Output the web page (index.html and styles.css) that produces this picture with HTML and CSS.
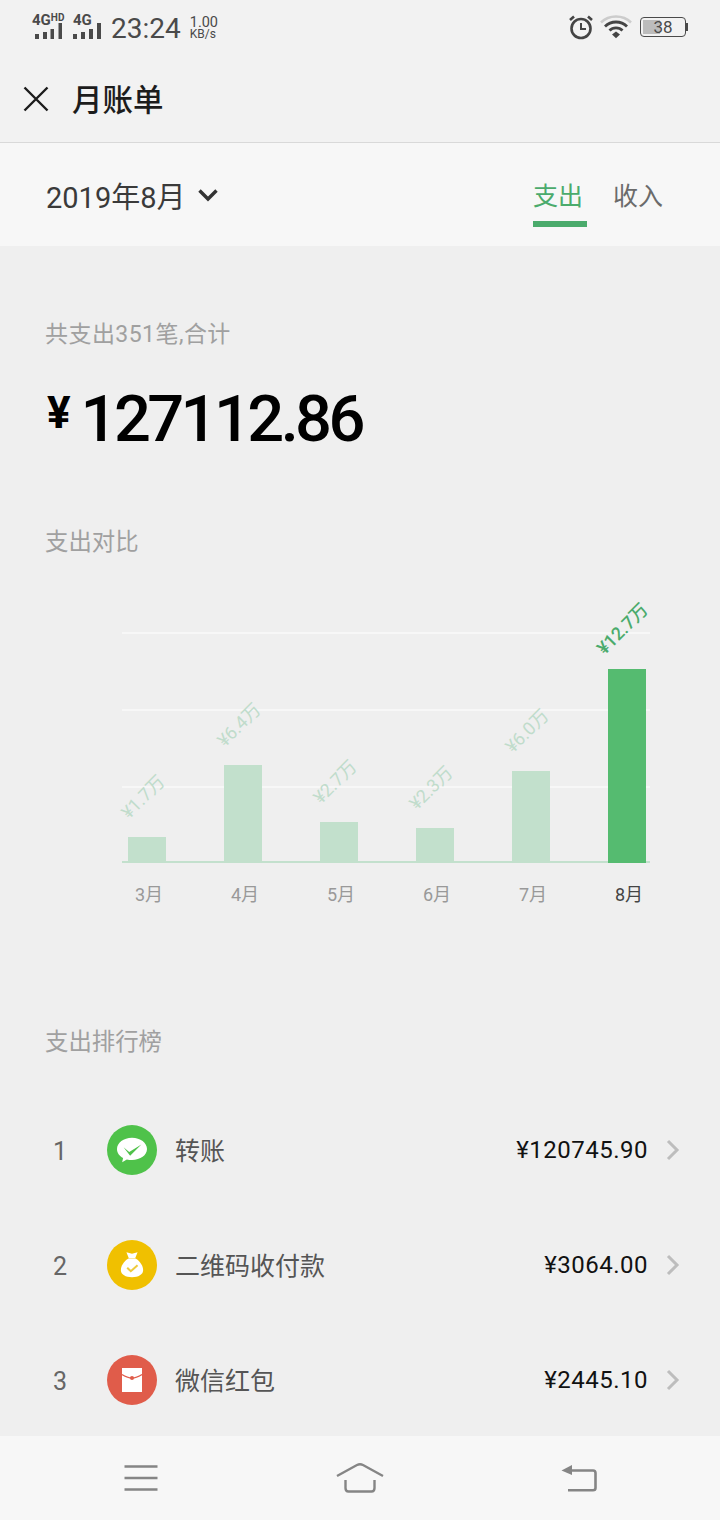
FILE: index.html
```html
<!DOCTYPE html>
<html lang="zh-CN">

<head>
    <meta charset="UTF-8">
    <meta name="viewport" content="width=device-width, initial-scale=1.0">
    <title>月账单</title>
    <link rel="stylesheet" href="styles.css">
</head>

<body>
    <div class="screen">
        <div class="statusbar">
            <div class="status-left">
                <div class="signal">
                    <span class="net">4G<sup>HD</sup></span>
                    <svg width="30" height="16" viewBox="0 0 30 16"><path d="M3 11h4v5H3zM11 9h4v7h-4zM18.500 6h3.500v10h-3.500zM26.500 0h3.500v16h-3.500z" fill="#4a4a4a"/></svg>
                </div>
                <div class="signal">
                    <span class="net">4G</span>
                    <svg width="30" height="16" viewBox="0 0 30 16"><path d="M0 11h4v5H0zM8 9h4v7H8zM16 6h4v10h-4zM24 0h4v16h-4z" fill="#4a4a4a"/></svg>
                </div>
                <span class="clock">23:24</span>
                <div class="speed"><span>1.00</span><span class="speed-unit">KB/s</span></div>
            </div>
            <div class="status-right">
                <svg width="26" height="26" viewBox="0 0 26 26" fill="none" stroke="#444"><circle cx="13" cy="14.500" r="9.500" stroke-width="2.600"/><path d="M13 9v6h5" stroke-width="2"/><path d="M2 6l4-3.500M24 6l-4-3.500" stroke-width="2.600"/></svg>
                <svg width="32" height="24" viewBox="0 0 32 24" fill="none"><path d="M1 7.500C9 -0.500 23 -0.500 31 7.500" stroke="#ccc" stroke-width="2.500"/><path d="M5 11.500C11 5.500 21 5.500 27 11.500M9.500 15.500C13 12 19 12 22.500 15.500" stroke="#444" stroke-width="2.800"/><path d="M12 19.500l4-3 4 3-4 3.800z" fill="#444"/></svg>
                <div class="battery">
                    <div class="battery-body"><div class="battery-level"></div><span class="battery-num">38</span></div>
                    <div class="battery-cap"></div>
                </div>
            </div>
        </div>

        <div class="topbar">
            <svg class="close-icon" width="26" height="26" viewBox="0 0 26 26" fill="none" stroke="#1c1c1c" stroke-width="2.400"><path d="M1.500 1.500l23 23M24.500 1.500l-23 23"/></svg>
            <h1 class="title">月账单</h1>
        </div>

        <div class="datebar">
            <div class="date-pick">
                <span>2019年8月</span>
                <svg width="20" height="14" viewBox="0 0 20 14" fill="none" stroke="#333" stroke-width="3.400"><path d="M1.500 2.500L10 11l8.500-8.500"/></svg>
            </div>
            <div class="tabs">
                <div class="tab tab-active">支出</div>
                <div class="tab">收入</div>
            </div>
        </div>

        <div class="content">
            <p class="section-label total-label">共支出351笔,合计</p>
            <div class="total"><span class="total-yen">¥</span><span>127112.86</span></div>

            <p class="section-label compare-label">支出对比</p>
            <div class="chart">
                <div class="gridlines">
                    <div class="gridline"></div>
                    <div class="gridline"></div>
                    <div class="gridline"></div>
                </div>
                <div class="bars">
                    <div class="bar-col"><span class="bar-value">¥1.7万</span><div class="bar" style="height: 26px;"></div></div>
                    <div class="bar-col"><span class="bar-value">¥6.4万</span><div class="bar" style="height: 98px;"></div></div>
                    <div class="bar-col"><span class="bar-value">¥2.7万</span><div class="bar" style="height: 41px;"></div></div>
                    <div class="bar-col"><span class="bar-value">¥2.3万</span><div class="bar" style="height: 35px;"></div></div>
                    <div class="bar-col"><span class="bar-value">¥6.0万</span><div class="bar" style="height: 92px;"></div></div>
                    <div class="bar-col bar-current"><span class="bar-value">¥12.7万</span><div class="bar" style="height: 194px;"></div></div>
                </div>
                <div class="months">
                    <span>3月</span>
                    <span>4月</span>
                    <span>5月</span>
                    <span>6月</span>
                    <span>7月</span>
                    <span class="month-current">8月</span>
                </div>
            </div>

            <p class="section-label rank-label">支出排行榜</p>
            <div class="rank-list">
                <div class="rank-row">
                    <span class="rank-no">1</span>
                    <div class="rank-icon icon-green">
                        <svg width="34" height="30" viewBox="0 0 36 32"><path d="M18 3C9 3 2 8.500 2 15c0 4 2.500 7.500 6.500 9.600L7.500 29l5-3c1.700.4 3.500.7 5.500.7 9 0 16-5.200 16-11.700S27 3 18 3z" fill="#fff"/><path d="M9 13l6 5L28 10l-12 12-7-9z" fill="#4fc24a"/></svg>
                    </div>
                    <span class="rank-name">转账</span>
                    <span class="rank-amount">¥120745.90</span>
                    <svg class="chevron" width="14" height="22" viewBox="0 0 14 22" fill="none" stroke="#bdbdbd" stroke-width="3"><path d="M2 2l9 9-9 9"/></svg>
                </div>
                <div class="rank-row">
                    <span class="rank-no">2</span>
                    <div class="rank-icon icon-yellow">
                        <svg width="24" height="27" viewBox="0 0 30 34"><path d="M8 1.500l7 2 7-2-3 7.500h-8z" fill="#fff"/><path d="M10.500 9.500h9C25 13 29 18.500 29 24c0 6-6 9-14 9S1 30 1 24c0-5.500 4-11 9.500-14.500z" fill="#fff"/><path d="M9 21l4.500 4.500L22 18" fill="none" stroke="#eecb3c" stroke-width="2.500"/></svg>
                    </div>
                    <span class="rank-name">二维码收付款</span>
                    <span class="rank-amount">¥3064.00</span>
                    <svg class="chevron" width="14" height="22" viewBox="0 0 14 22" fill="none" stroke="#bdbdbd" stroke-width="3"><path d="M2 2l9 9-9 9"/></svg>
                </div>
                <div class="rank-row">
                    <span class="rank-no">3</span>
                    <div class="rank-icon icon-red">
                        <svg width="20" height="24" viewBox="0 0 20 24"><path d="M0 0h20v24H0z" fill="#fff"/><path d="M0 6.500C4 9 7 10 10 10s6-1 10-3.500" fill="none" stroke="#e05c4a" stroke-width="1.200"/><circle cx="10" cy="10" r="2" fill="#e05c4a"/></svg>
                    </div>
                    <span class="rank-name">微信红包</span>
                    <span class="rank-amount">¥2445.10</span>
                    <svg class="chevron" width="14" height="22" viewBox="0 0 14 22" fill="none" stroke="#bdbdbd" stroke-width="3"><path d="M2 2l9 9-9 9"/></svg>
                </div>
            </div>
        </div>

        <div class="navbar">
            <svg width="34" height="26" viewBox="0 0 34 26" fill="none" stroke="#858585" stroke-width="2.600"><path d="M0.500 1.500h33M0.500 13h33M0.500 24.500h33"/></svg>
            <svg width="48" height="30" viewBox="0 0 48 30" fill="none" stroke="#858585" stroke-width="2.400"><path d="M1 13L21 2c2-1 4-1 6 0l20 11"/><path d="M9.500 17v8c0 2 1 3.500 3 3.500h23c2 0 3-1.500 3-3.500v-8"/></svg>
            <svg width="36" height="28" viewBox="0 0 36 28" fill="none" stroke="#858585" stroke-width="2.600"><path d="M6 6.500h26c1.500 0 2.500 1 2.500 2.500v15c0 1.500-1 2.200-2.500 2.200H7"/><path d="M0.500 6.500L11 1v10z" fill="#858585" stroke="none"/></svg>
        </div>
    </div>
</body>

</html>
```

FILE: styles.css
```css
* {
    font-family: "Roboto", "Noto Sans CJK SC", sans-serif;
    margin: 0;
    padding: 0;
    box-sizing: border-box;
}

body {
    background-color: #f0f0f0;
}

.screen {
    width: 720px;
    height: 1520px;
    display: flex;
    flex-direction: column;
    overflow: hidden;
}

/* status bar */
.statusbar {
    height: 56px;
    display: flex;
    justify-content: space-between;
    align-items: flex-start;
    padding: 14px 32px 0;
    background-color: #f2f2f2;
}

.status-left {
    display: flex;
    align-items: flex-start;
    gap: 7px;
}

.signal {
    display: flex;
    flex-direction: column;
    width: 34px;
    height: 25px;
}

.signal svg {
    display: block;
    margin-top: -4px;
}

.net {
    font-size: 15px;
    font-weight: 700;
    line-height: 13px;
    color: #4a4a4a;
    white-space: nowrap;
}

.net sup {
    font-size: 10px;
    line-height: 8px;
    vertical-align: 4px;
}

.clock {
    font-size: 28px;
    line-height: 30px;
    color: #4a4a4a;
    margin-left: -3px;
}

.speed {
    display: flex;
    flex-direction: column;
    padding-top: 2px;
    margin-left: 2px;
    font-size: 14.500px;
    line-height: 13px;
    color: #4a4a4a;
}

.speed-unit {
    font-size: 12px;
    line-height: 11px;
}

.status-right {
    display: flex;
    align-items: center;
    gap: 6px;
}

.battery {
    display: flex;
    align-items: center;
    margin-left: 2px;
}

.battery-body {
    width: 46px;
    height: 20px;
    border: 1.500px solid #4a4a4a;
    border-radius: 4px;
    position: relative;
    display: flex;
    justify-content: center;
    align-items: center;
}

.battery-level {
    position: absolute;
    left: 2px;
    top: 2px;
    bottom: 2px;
    width: 17px;
    background-color: #bcbcbc;
}

.battery-num {
    position: relative;
    font-size: 17px;
    line-height: 17px;
    color: #4a4a4a;
}

.battery-cap {
    width: 2px;
    height: 8px;
    background-color: #4a4a4a;
}

/* title */
.topbar {
    height: 87px;
    display: flex;
    align-items: center;
    gap: 23px;
    padding: 0 23px;
    background-color: #f2f2f2;
    border-bottom: 1px solid #d9d9d9;
}

.title {
    font-size: 30.500px;
    font-weight: 500;
    color: #1c1c1c;
    line-height: 40px;
    padding-top: 3px;
}

.datebar {
    height: 103px;
    display: flex;
    justify-content: space-between;
    padding: 0 53px 0 46px;
    background-color: #f7f7f7;
}

.date-pick {
    display: flex;
    align-items: center;
    gap: 12px;
    font-size: 29px;
    color: #3a3a3a;
}

.tabs {
    display: flex;
    gap: 26px;
}

.tab {
    width: 54px;
    height: 84px;
    padding-top: 36px;
    font-size: 25px;
    line-height: 36px;
    color: #6b6b6b;
    border-bottom: 6px solid transparent;
}

.tab-active {
    color: #4bab6c;
    border-bottom-color: #4bab6c;
}

/* main part */
.content {
    flex: 1;
    background-color: #efefef;
    overflow: hidden;
}

.section-label {
    font-size: 23.400px;
    line-height: 32px;
    color: #a0a0a0;
    padding-left: 45px;
}

.total-label {
    margin-top: 73px;
    font-size: 23px;
    letter-spacing: 0.450px;
}

.total {
    display: flex;
    align-items: flex-start;
    gap: 10px;
    padding-left: 47px;
    margin-top: 28px;
    height: 83px;
    font-size: 65px;
    font-weight: 500;
    line-height: 80px;
    letter-spacing: -3.600px;
    color: #000;
}

.total-yen {
    font-size: 44px;
    font-weight: 700;
    line-height: 68px;
    letter-spacing: 0;
}

.compare-label {
    margin-top: 64px;
}

.chart {
    margin-top: 38px;
    position: relative;
    padding-left: 99px;
}

.gridlines {
    position: absolute;
    left: 122px;
    top: 36px;
    width: 528px;
    display: flex;
    flex-direction: column;
    gap: 75px;
}

.gridline {
    height: 2px;
    background-color: #f7f7f7;
}

.bars {
    position: relative;
    height: 267px;
    width: 576px;
    display: flex;
    align-items: flex-end;
}

.bars::after {
    content: "";
    position: absolute;
    left: 23px;
    right: 25px;
    bottom: 0;
    height: 2px;
    background-color: #c3e0cd;
}

.bar-col {
    flex: none;
    width: 96px;
    display: flex;
    flex-direction: column;
    align-items: center;
    gap: 30px;
    position: relative;
    z-index: 1;
}

.bar {
    width: 38px;
    background-color: #c2e0cc;
}

.bar-value {
    font-size: 18px;
    line-height: 20px;
    color: #c0dccb;
    white-space: nowrap;
    transform: translateX(-4px) rotate(-45deg);
    height: 20px;
}

.bar-current .bar {
    background-color: #55bb70;
}

.bar-current .bar-value {
    color: #4bab6c;
    font-weight: 500;
}

.months {
    display: flex;
    margin-top: 19px;
    padding-left: 2px;
}

.months span {
    flex: none;
    width: 96px;
    text-align: center;
    font-size: 18px;
    line-height: 26px;
    color: #999;
}

.months .month-current {
    color: #444;
}

.rank-label {
    margin-top: 118px;
}

.rank-list {
    margin-top: 34px;
}

.rank-row {
    height: 115px;
    display: flex;
    align-items: center;
    padding-left: 53px;
}

.rank-no {
    width: 54px;
    padding-top: 4px;
    font-size: 25px;
    color: #666;
}

.rank-icon {
    width: 50px;
    height: 50px;
    border-radius: 50%;
    display: flex;
    justify-content: center;
    align-items: center;
}

.icon-green {
    background-color: #4fc24a;
}

.icon-yellow {
    background-color: #f0c000;
}

.icon-red {
    background-color: #e05c4a;
}

.rank-name {
    flex: 1;
    margin-left: 18px;
    padding-bottom: 2px;
    font-size: 25px;
    color: #555;
}

.rank-amount {
    font-size: 24px;
    letter-spacing: 0.500px;
    color: #111;
}

.chevron {
    margin-left: 18px;
    margin-right: 40px;
}

/* bottom bar */
.navbar {
    height: 84px;
    display: flex;
    align-items: center;
    justify-content: space-between;
    padding: 0 123px 0 124px;
    background-color: #f7f7f7;
}
```
